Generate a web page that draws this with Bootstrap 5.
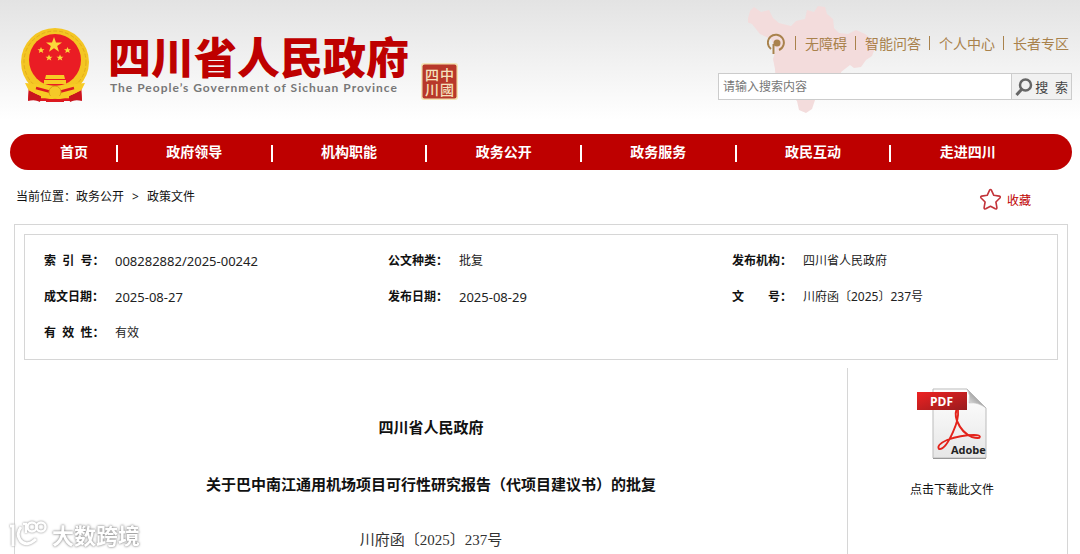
<!DOCTYPE html>
<html lang="zh-CN">
<head>
<meta charset="utf-8">
<meta name="viewport" content="width=device-width, initial-scale=1">
<title>四川省人民政府 - 政策文件</title>
<link href="https://cdn.jsdelivr.net/npm/bootstrap@5.3.0/dist/css/bootstrap.min.css" rel="stylesheet">
<style>
:root { --gov-red: #be0000; --gold: #a9824c; --line: #d6d6d6; }
body { font-family: "Noto Sans", "Noto Sans CJK SC", sans-serif; font-size: 12px; line-height: 20px; color: #111; background: #fff; overflow-x: hidden; }
a { color: inherit; text-decoration: none; }
.site-head { background: linear-gradient(#e3e3e3, #fff 120px); height: 134px; padding: 0 8px 0 20px; }
.emblem { margin-top: 27px; }
.brand-text { margin: 31px 0 0 18px; flex: 0 0 301px; }
.brand-name { font-family: "Noto Sans CJK SC", sans-serif; font-size: 43px; line-height: 48px; font-weight: 900; color: var(--gov-red); margin: 0; }
.brand-en { font-family: Lato, sans-serif; font-size: 12px; line-height: 18px; font-weight: 700; letter-spacing: 1px; color: #777; margin: 0; padding-left: 2px; }
.seal { margin: 63px 0 0 12px; }
.head-tools { width: 354px; position: relative; padding-top: 32px; }
.province { position: absolute; left: 30px; top: 4px; }
.quick { position: relative; gap: 8px; font-size: 14px; line-height: 24px; color: var(--gold); justify-content: flex-end; padding-right: 3px; }
.quick a + a::before { content: ""; display: inline-block; width: 1px; height: 14px; background: var(--gold); margin-right: 9px; vertical-align: -1px; }
.search { position: relative; margin-top: 17px; border: 1px solid #ccc; height: 27px; background: #fff; }
.search input { border: 0; padding: 0 4px; font-size: 12px; background: transparent; min-width: 0; outline-offset: -1px; }
.search input::placeholder { color: #777; opacity: 1; }
.search button { border: 0; border-left: 1px solid #ccc; background: #f1f1f1; width: 60px; font-size: 13px; color: #444; padding: 0 3px; }
.main-nav { background: var(--gov-red); border-radius: 18px; height: 36px; margin: 0 8px 0 10px; padding-right: 28px; font-size: 14px; font-weight: 700; color: #fff; }
.main-nav a { flex: 1 1 0; text-align: center; position: relative; line-height: 36px; }
.main-nav a:first-child { flex: 0 0 108px; padding-left: 22px; }
.main-nav a:not(:last-child) { border-right: 2px solid #fff; border-image: linear-gradient(transparent 11px, #fff 11px, #fff 27px, transparent 27px) 1; border-width: 0 2px 0 0; }
.path-row { padding: 17px 49px 0 16px; height: 54px; }
.fav { color: var(--gov-red); height: 24px; gap: 5px; }
.doc-panel { border: 1px solid var(--line); border-bottom: 0; margin: 0 12px 0 14px; padding: 9px 0 0; }
.meta-box { border: 1px solid var(--line); padding: 8px 0; line-height: 36px; margin: 0 9px; }
.meta-box dl { margin: 0; padding-left: 19px; display: flex; }
.meta-box dt { width: 71px; white-space: pre; }
.meta-box dd { margin: 0; color: #222; }
.meta-box .num { font-size: 13px; }
.article { padding-top: 30px; font-size: 15px; line-height: 57px; text-align: center; font-family: "Noto Sans CJK SC", sans-serif; }
.article h2 { font-size: 15px; line-height: 57px; font-weight: 700; margin: 0; }
.article p { margin: 0; font-family: "Liberation Serif", "Noto Sans CJK SC", serif; color: #333; font-size: 15px; }
.doc-body { padding-top: 8px; }
.download { flex: 0 0 220px; border-left: 1px solid var(--line); padding: 20px 11px 0 0; text-align: center; }
.download a { display: block; }
.download svg { display: block; margin: 0 auto 20px; }
.stamp { position: fixed; left: 8px; bottom: 5px; gap: 4px; color: #fff; font: 700 22px/30px "Noto Sans CJK SC", sans-serif; text-shadow: 0 0 2px #888, 0 0 3px #aaa; pointer-events: none; }
.stamp svg { filter: drop-shadow(0 0 1px #888); }
</style>
</head>
<body class="d-flex flex-column min-vh-100">

<header class="site-head d-flex align-items-start">
  <svg class="emblem flex-shrink-0" width="70" height="76" viewBox="0 0 70 76" aria-label="国徽" role="img">
    <path d="M9 54 L8 73 Q14 72 20 74 L50 74 Q56 72 62 73 L61 54Z" fill="#dd1720"/>
    <circle cx="35" cy="35" r="34" fill="#f4c623"/>
    <circle cx="35" cy="35" r="31" fill="none" stroke="#e2ad1c" stroke-width="1" stroke-dasharray="4 2"/>
    <circle cx="35" cy="33" r="26" fill="#ea1c24"/>
    <path d="M34 10l2 5.400h6l-4.800 3.600 1.800 5.800-5-3.500-5 3.500 1.800-5.800-4.800-3.600h6z" fill="#fbd83a"/>
    <g fill="#fbd83a">
      <path id="st" d="M21 20l1 2.200h2.500l-2 1.500.8 2.400-2.300-1.400-2.200 1.400.7-2.400-2-1.500h2.500z"/>
      <use href="#st" x="26.500"/><use href="#st" x="8" y="7.500"/><use href="#st" x="19" y="7.500"/>
    </g>
    <path d="M26 48h18l1 4h-20zM24 53h22v4h-22z" fill="#f7cb25"/>
    <path d="M5 56l30 3 30-3-3 6-12 8-15 3-15-3-12-8z" fill="#f7cb25"/>
    <path d="M16 61l15 4M54 61l-15 4" stroke="#dc1a20" stroke-width="2.500"/>
    <circle cx="35" cy="65" r="6" fill="#f5c928" stroke="#d99b16"/>
    <path d="M9 64l12 5-1 6q-5-3-12-1zM61 64l-12 5 1 6q5-3 12-1z" fill="#c9141e"/>
    <path d="M9 62l13 6M61 62l-13 6M21 70h28" stroke="#f7cb25" stroke-width="2.500"/>
    <path d="M26 73.500h18" stroke="#dc1a20" stroke-width="3"/>
  </svg>
  <div class="brand-text">
    <h1 class="brand-name text-nowrap">四川省人民政府</h1>
    <p class="brand-en text-nowrap">The People’s Government of Sichuan Province</p>
  </div>
  <svg class="seal flex-shrink-0" width="37" height="37" viewBox="0 0 37 37" aria-label="中国四川" role="img">
    <rect width="37" height="37" rx="3" fill="#f3e3b4"/>
    <rect x="1.500" y="1.500" width="34" height="34" rx="2" fill="#b8382a"/>
    <g fill="#f5e2bd" font-family="Noto Sans CJK SC, sans-serif" font-size="14" font-weight="500">
      <text x="4" y="17">四</text><text x="4" y="32">川</text>
      <text x="19" y="17">中</text><text x="19" y="32">國</text>
    </g>
  </svg>
  <div class="head-tools ms-auto flex-shrink-0">
    <svg class="province" width="136" height="110" viewBox="0 0 136 110" aria-hidden="true">
      <path fill="#f3dcdc" d="M2 7l4-4 7 5 8-2 4 8 6 5 12 3 5-5 9-2 2-9 7 2 4-6 7 1 2 7 6 5 1 9 5 5 9 1 8-4 9 4 12 9-5 13-6 4-5 7-7 1-4-3-9 7 1 5-3 7-9 2-9 5-6 9-3 9-6 4-7-3-2-9-7-7-8-1-6-8-1-16-2-10 3-10-5-10-11-5-8-10-5-2z"/>
    </svg>
    <nav class="quick d-flex align-items-center" aria-label="快捷入口">
      <a href="#" aria-label="无障碍标识" class="d-flex"><svg width="20" height="24" viewBox="0 0 20 24" fill="none" stroke="#a9824c"><path d="M4 17A8 8 0 1 1 12 18" stroke-width="2"/><path d="M6.500 22V12" stroke-width="2"/><circle cx="10" cy="11" r="3.500" fill="#a9824c" stroke="none"/></svg></a>
      <a href="#">无障碍</a><a href="#">智能问答</a><a href="#">个人中心</a><a href="#">长者专区</a>
    </nav>
    <form class="search d-flex" role="search">
      <input type="text" class="flex-grow-1" placeholder="请输入搜索内容" aria-label="请输入搜索内容">
      <button type="button" class="d-flex align-items-center justify-content-between"><svg width="18" height="18" viewBox="0 0 18 18" fill="none" stroke="#666" aria-hidden="true"><circle cx="10.500" cy="7" r="5.500" stroke-width="2.500"/><path d="M6.500 11.500L1.500 17" stroke-width="3"/></svg><span class="text-nowrap">搜&nbsp; 索</span></button>
    </form>
  </div>
</header>

<nav class="main-nav d-flex" aria-label="主导航">
  <a href="#">首页</a><a href="#">政府领导</a><a href="#">机构职能</a><a href="#">政务公开</a><a href="#">政务服务</a><a href="#">政民互动</a><a href="#">走进四川</a>
</nav>

<div class="path-row d-flex justify-content-between">
  <div>当前位置：<a href="#">政务公开</a><span class="px-2">&gt;</span><a href="#">政策文件</a></div>
  <a href="#" class="fav d-flex align-items-center"><svg width="23" height="23" viewBox="0 0 23 23" fill="none" stroke="#c3343a" stroke-width="1.600" stroke-linejoin="round" aria-hidden="true"><path d="M10.500 2.300q1-1.500 2 0l2.300 5 5.500.8q1.600.5.600 1.900l-4 4 1 5.700q0 1.600-1.600 1.100l-4.800-2.600-4.800 2.600q-1.600.5-1.600-1.100l1-5.700-4-4q-1-1.400.6-1.900l5.500-.8z"/></svg><span class="pt-1">收藏</span></a>
</div>

<main class="doc-panel d-flex flex-column flex-grow-1">
  <section class="meta-box row">
    <dl class="col-4"><dt>索  引  号：</dt><dd class="num">008282882/2025-00242</dd></dl>
    <dl class="col-4"><dt>公文种类：</dt><dd>批复</dd></dl>
    <dl class="col-4"><dt>发布机构：</dt><dd>四川省人民政府</dd></dl>
    <dl class="col-4"><dt>成文日期：</dt><dd class="num">2025-08-27</dd></dl>
    <dl class="col-4"><dt>发布日期：</dt><dd class="num">2025-08-29</dd></dl>
    <dl class="col-4"><dt>文　　号：</dt><dd>川府函〔2025〕237号</dd></dl>
    <dl class="col-4"><dt>有  效  性：</dt><dd>有效</dd></dl>
  </section>
  <div class="doc-body d-flex flex-grow-1">
    <article class="article flex-grow-1">
      <h2>四川省人民政府</h2>
      <h2>关于巴中南江通用机场项目可行性研究报告（代项目建议书）的批复</h2>
      <p>川府函〔2025〕237号</p>
    </article>
    <aside class="download">
      <a href="#">
        <svg width="72" height="72" viewBox="0 0 72 72" aria-hidden="true">
          <defs>
            <linearGradient id="pg" x1="0" y1="0" x2="0" y2="1"><stop offset="0" stop-color="#fff"/><stop offset="1" stop-color="#e6e6e6"/></linearGradient>
            <linearGradient id="rd" x1="0" y1="0" x2="1" y2="1"><stop offset="0" stop-color="#ee2222"/><stop offset="1" stop-color="#981b1e"/></linearGradient>
            <linearGradient id="fd" x1="0" y1="1" x2="1" y2="0"><stop offset="0" stop-color="#f4f4f4"/><stop offset=".5" stop-color="#aaa"/><stop offset="1" stop-color="#eee"/></linearGradient>
          </defs>
          <path d="M17 1h34l19 19v50H17z" fill="url(#pg)" stroke="#bbb"/>
          <path d="M17 70.500h53" stroke="#999"/>
          <path d="M51 1q4 6 2 14 9-1 17 5z" fill="url(#fd)" stroke="#bbb" stroke-width=".5"/>
          <g fill="none" stroke="#e3231b">
            <path d="M42 20q-4 4-1 13 5 12 15 16 7 2 8 0" stroke-width="2"/>
            <path d="M42 22q1 9-5 22Q29 62 23 61q-3-4 8-9 14-5 27-5 6 0 6 2" stroke-width="1.800"/>
          </g>
          <rect x="1" y="4" width="50" height="18" fill="url(#rd)"/>
          <text x="14" y="17.500" font-family="Open Sans, sans-serif" font-size="12" font-weight="700" fill="#fff">PDF</text>
          <text x="35" y="66" font-family="Open Sans, sans-serif" font-size="11" font-weight="700" fill="#222">Adobe</text>
        </svg>
        点击下载此文件
      </a>
    </aside>
  </div>
</main>

<div class="stamp d-flex align-items-start">
  <svg width="40" height="30" viewBox="0 0 40 30" fill="none" stroke="#fff" stroke-width="3" aria-hidden="true"><path d="M2 7h3v20M13 8q-5 7-1 13 6 8 16-1" /><path d="M15 5h3v9" stroke-width="2.500"/><circle cx="24" cy="8" r="4.500" stroke-width="2.500"/><circle cx="33" cy="8" r="4.500" stroke-width="2.500"/></svg>
  <span>大数跨境</span>
</div>

<script src="https://cdn.jsdelivr.net/npm/bootstrap@5.3.0/dist/js/bootstrap.bundle.min.js"></script>
</body>
</html>
